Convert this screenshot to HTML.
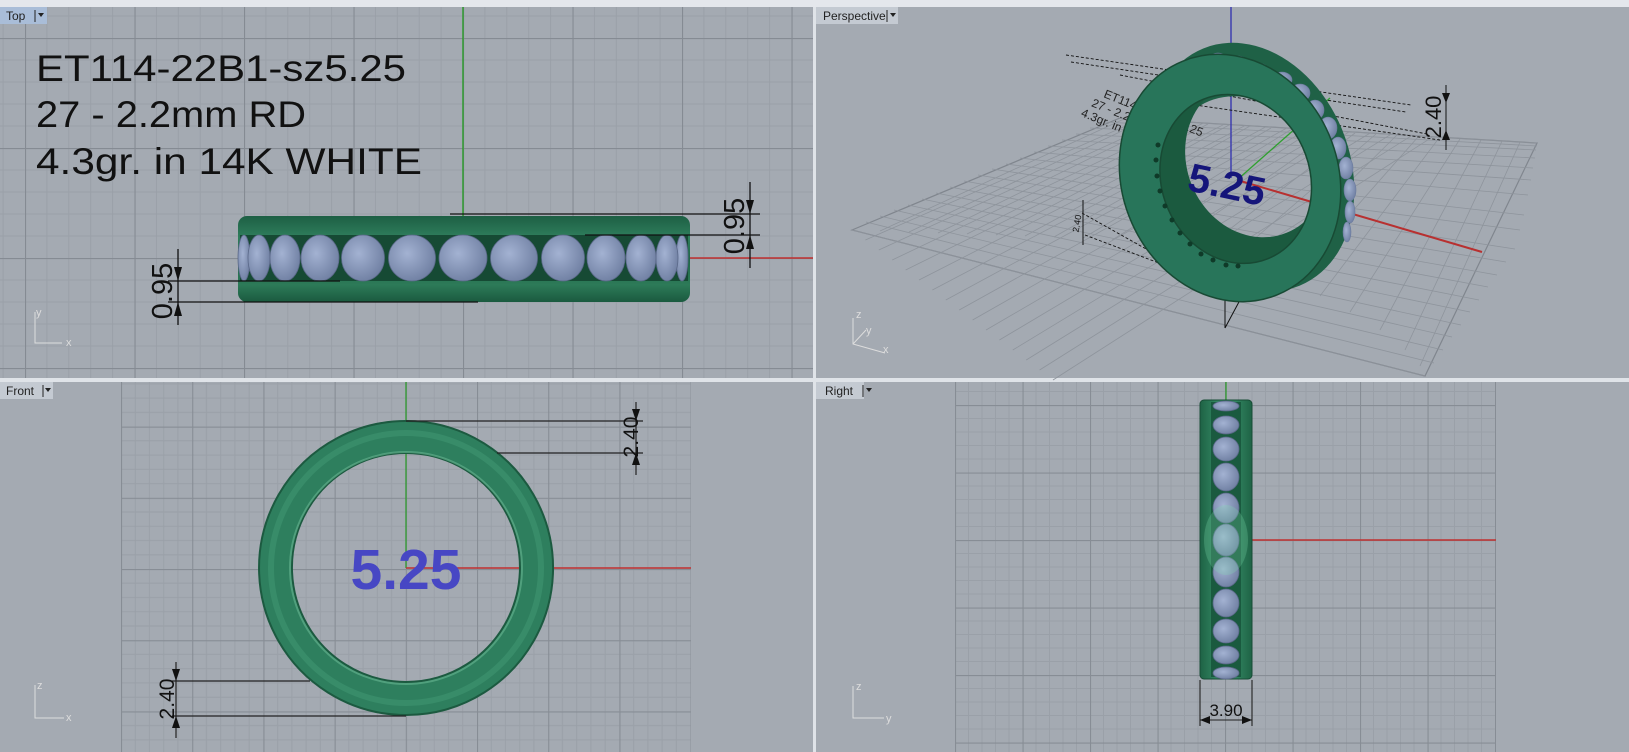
<!DOCTYPE html>
<html><head><meta charset="utf-8"><style>
html,body{margin:0;padding:0;width:1629px;height:752px;overflow:hidden;background:#a4aab2}
svg{display:block}
text{font-family:"Liberation Sans",Arial,sans-serif}
</style></head><body>
<svg width="1629" height="752" viewBox="0 0 1629 752" xmlns="http://www.w3.org/2000/svg">
<defs>
<pattern id="gTop" x="25" y="38" width="109.5" height="110" patternUnits="userSpaceOnUse">
 <path d="M21.9 0V110M43.8 0V110M65.7 0V110M87.6 0V110M0 22H109.5M0 44H109.5M0 66H109.5M0 88H109.5" stroke="#9aa0a8" stroke-width="1" fill="none"/>
 <path d="M0.5 0V110M0 0.5H109.5" stroke="#858b93" stroke-width="1.2" fill="none"/>
</pattern>
<pattern id="gFront" x="121" y="355.4" width="71.2" height="71.2" patternUnits="userSpaceOnUse">
 <path d="M14.24 0V71.2M28.48 0V71.2M42.72 0V71.2M56.96 0V71.2M0 14.24H71.2M0 28.48H71.2M0 42.72H71.2M0 56.96H71.2" stroke="#9aa0a8" stroke-width="1" fill="none"/>
 <path d="M0.5 0V71.2M0 0.5H71.2" stroke="#878d95" stroke-width="1.2" fill="none"/>
</pattern>
<pattern id="gRight" x="955" y="337.5" width="67.5" height="67.5" patternUnits="userSpaceOnUse">
 <path d="M13.5 0V67.5M27 0V67.5M40.5 0V67.5M54 0V67.5M0 13.5H67.5M0 27H67.5M0 40.5H67.5M0 54H67.5" stroke="#9aa0a8" stroke-width="1" fill="none"/>
 <path d="M0.5 0V67.5M0 0.5H67.5" stroke="#878d95" stroke-width="1.2" fill="none"/>
</pattern>
<linearGradient id="grTop" x1="0" y1="0" x2="0" y2="1">
 <stop offset="0" stop-color="#1d5f44"/><stop offset="0.25" stop-color="#2f7e5c"/><stop offset="0.5" stop-color="#1f6647"/><stop offset="0.8" stop-color="#2d7a58"/><stop offset="1" stop-color="#1a5a3f"/>
</linearGradient>
<linearGradient id="grRight" x1="0" y1="0" x2="1" y2="0">
 <stop offset="0" stop-color="#1e6245"/><stop offset="0.5" stop-color="#3d9a70"/><stop offset="1" stop-color="#1e6245"/>
</linearGradient>
<radialGradient id="stone" cx="0.4" cy="0.4" r="0.7">
 <stop offset="0" stop-color="#a3b2d2"/><stop offset="1" stop-color="#6b7b9e"/>
</radialGradient>
<clipPath id="hole">
 <ellipse cx="1235" cy="181" rx="74" ry="86" transform="rotate(-22 1230 178)"/>
</clipPath>
</defs>

<rect x="0" y="0" width="1629" height="7" fill="#e4e7ec"/>

<!-- TOP VIEW -->
<rect x="0" y="7" width="813" height="371" fill="url(#gTop)"/>
<line x1="463" y1="7" x2="463" y2="216" stroke="#2f9a2f" stroke-width="1.5"/>
<line x1="690" y1="258" x2="813" y2="258" stroke="#c03030" stroke-width="1.5"/>
<rect x="0" y="7" width="47" height="17" fill="#a9bdd8"/>
<text x="6" y="20" font-size="12" fill="#222">Top</text>
<line x1="35" y1="10" x2="35" y2="22" stroke="#222"/>
<path d="M38 13h6l-3 4z" fill="#222"/>
<text x="36" y="81" font-size="37" fill="#111" textLength="370" lengthAdjust="spacingAndGlyphs">ET114-22B1-sz5.25</text>
<text x="36" y="127" font-size="37" fill="#111" textLength="270" lengthAdjust="spacingAndGlyphs">27 - 2.2mm RD</text>
<text x="36" y="174" font-size="37" fill="#111" textLength="386" lengthAdjust="spacingAndGlyphs">4.3gr.  in 14K WHITE</text>
<rect x="238" y="216" width="452" height="86" rx="9" fill="url(#grTop)"/>
<rect x="240" y="235" width="448" height="46" fill="#164a34"/>
<g stroke="#5a6888" stroke-width="0.8" fill="url(#stone)">
 <ellipse cx="244" cy="258" rx="6" ry="23"/><ellipse cx="682" cy="258" rx="6" ry="23"/>
 <ellipse cx="259" cy="258" rx="11" ry="23"/><ellipse cx="667" cy="258" rx="11" ry="23"/>
 <ellipse cx="285" cy="258" rx="15" ry="23"/><ellipse cx="641" cy="258" rx="15" ry="23"/>
 <ellipse cx="320" cy="258" rx="19" ry="23"/><ellipse cx="606" cy="258" rx="19" ry="23"/>
 <ellipse cx="363" cy="258" rx="21.5" ry="23"/><ellipse cx="563" cy="258" rx="21.5" ry="23"/>
 <ellipse cx="412" cy="258" rx="23.5" ry="23"/><ellipse cx="514" cy="258" rx="23.5" ry="23"/>
 <ellipse cx="463" cy="258" rx="24" ry="23"/>
</g>
<g stroke="#111" stroke-width="1.3">
 <line x1="450" y1="214" x2="760" y2="214"/><line x1="585" y1="235" x2="760" y2="235"/>
 <line x1="750" y1="182" x2="750" y2="268"/>
 <line x1="168" y1="281" x2="340" y2="281"/><line x1="168" y1="302" x2="478" y2="302"/>
 <line x1="178" y1="249" x2="178" y2="325"/>
</g>
<g fill="#111">
 <path d="M750 214l-4 -14h8z"/><path d="M750 235l-4 14h8z"/>
 <path d="M178 281l-4 -14h8z"/><path d="M178 302l-4 14h8z"/>
</g>
<text transform="translate(744,226) rotate(-90)" font-size="29" fill="#111" text-anchor="middle">0.95</text>
<text transform="translate(172,291) rotate(-90)" font-size="29" fill="#111" text-anchor="middle">0.95</text>
<g stroke="#ddd" stroke-width="1" fill="none"><path d="M35 312V343H62"/></g>
<text x="36" y="316" font-size="11" fill="#ddd">y</text>
<text x="66" y="346" font-size="11" fill="#ddd">x</text>

<rect x="813" y="7" width="3" height="745" fill="#dfe3e8"/>
<rect x="0" y="378" width="1629" height="4" fill="#dfe3e8"/>

<!-- PERSPECTIVE -->
<rect x="816" y="7" width="813" height="371" fill="#a4aab2"/>
<g stroke="#8e949c" stroke-width="0.8" fill="none">
<path d="M852 230L1120 118L1537 143L1425 376Z" stroke="#80868e" stroke-width="1.2"/>
<path d="M865.4 240.0L1140.9 119.3M878.8 250.0L1161.7 120.5M892.2 260.0L1182.6 121.8M905.6 270.0L1203.4 123.0M919.0 280.0L1224.2 124.3M932.4 290.0L1245.1 125.5M945.8 300.0L1265.9 126.8M959.2 310.0L1286.8 128.0M972.6 320.0L1307.7 129.3M986.0 330.0L1328.5 130.5M999.4 340.0L1349.3 131.8M1012.8 350.0L1370.2 133.0M1026.2 360.0L1391.0 134.3M1039.6 370.0L1411.8 135.5M1053.0 380.0L1432.7 136.8"/>
<path d="M866 222L1434 363M880 216L1443 350M894 210L1452 337M908 205L1461 325M922 199L1470 312M936 193L1479 300M950 187L1488 287M964 181L1497 275M978 175L1506 262M992 169L1515 249M1006 164L1520 230M1020 158L1524 215M1034 152L1528 195M1048 146L1531 180M1062 140L1533 168M1076 134L1535 158M1090 128L1536 150M1105 122L1537 146"/>
<path d="M880 231L1124 119M909 232L1145 120M938 233L1166 121M967 234L1187 123M996 235L1208 124M1025 236L1229 125M1054 237L1250 126M1083 238L1271 128M1112 240L1292 129M1141 242L1313 130M1170 246L1334 131M1200 252L1355 133M1230 260L1376 134M1260 270L1397 135M1290 282L1418 137M1320 296L1439 138M1350 312L1460 139M1380 330L1481 140M1405 350L1502 141M1420 366L1520 142"/>
<path d="M852 230L1425 376M1120 118L1537 143"/>
</g>
<line x1="1231" y1="7" x2="1231" y2="178" stroke="#3030b0" stroke-width="1.3"/>
<line x1="1237" y1="180" x2="1482" y2="252" stroke="#b83030" stroke-width="2"/>
<line x1="1237" y1="180" x2="1330" y2="98" stroke="#30a030" stroke-width="1.3"/>
<g transform="translate(1103,97) rotate(22)" font-size="12" fill="#222">
 <text x="0" y="0">ET114-22B1-sz5.25</text><text x="-8" y="13">27 - 2.2mm RD</text><text x="-14" y="26">4.3gr.  in 14K WHITE</text>
</g>
<g stroke="#111" stroke-width="0.9" stroke-dasharray="3,2" fill="none">
 <path d="M1066 55L1411 105M1071 62L1406 112M1120 75L1427 134M1160 100L1440 140M1082 213L1171 263M1085 235L1172 268"/>
</g>
<g stroke="#111" stroke-width="1"><path d="M1446 85V150M1083 200V245M1225 290V328M1225 328L1240 300"/></g>
<path d="M1446 103l-4-10h8zM1446 130l-4 10h8z" fill="#111"/>
<text transform="translate(1441,117) rotate(-90)" font-size="22" fill="#111" text-anchor="middle">2.40</text>
<text transform="translate(1080,224) rotate(-80)" font-size="9" fill="#111" text-anchor="middle">2.40</text>
<!-- ring back band -->
<path fill-rule="evenodd" fill="#1f6146" transform="rotate(-22 1240 176)"
 d="M1254 44A98 128 0 1 0 1254.1 44ZM1240 95A74 86 0 1 1 1239.9 95Z"/>
<g fill="url(#stone)" stroke="#6b7b9e" stroke-width="0.6">
 <ellipse cx="1218" cy="58" rx="8" ry="5"/><ellipse cx="1238" cy="62" rx="9" ry="6"/><ellipse cx="1258" cy="70" rx="10" ry="7"/>
 <ellipse cx="1282" cy="80" rx="10" ry="8"/><ellipse cx="1300" cy="93" rx="10" ry="9"/><ellipse cx="1315" cy="110" rx="9" ry="10"/>
 <ellipse cx="1328" cy="128" rx="9" ry="11"/><ellipse cx="1338" cy="148" rx="8" ry="11"/><ellipse cx="1346" cy="168" rx="7" ry="11"/>
 <ellipse cx="1350" cy="190" rx="6" ry="11"/><ellipse cx="1350" cy="212" rx="5" ry="11"/><ellipse cx="1347" cy="232" rx="4" ry="10"/>
</g>
<!-- inner band visible through hole -->
<g clip-path="url(#hole)">
 <path fill-rule="evenodd" fill="#1b5a3f" d="M1100 60H1360V300H1100Z M1262 90A70 80 0 1 1 1261.9 90Z" transform="rotate(-22 1230 178)"/>
</g>
<path fill-rule="evenodd" fill="#28755a" stroke="#184a34" stroke-width="1.5" transform="rotate(-22 1230 178)"
 d="M1230 52A108 126 0 1 0 1230.1 52ZM1235 95A74 86 0 1 1 1234.9 95Z"/>
<g fill="#0f3a28">
 <circle cx="1158" cy="145" r="2.5"/><circle cx="1156" cy="160" r="2.5"/><circle cx="1157" cy="176" r="2.5"/><circle cx="1160" cy="191" r="2.5"/>
 <circle cx="1165" cy="206" r="2.5"/><circle cx="1172" cy="220" r="2.5"/><circle cx="1180" cy="233" r="2.5"/><circle cx="1190" cy="244" r="2.5"/>
 <circle cx="1201" cy="254" r="2.5"/><circle cx="1213" cy="260" r="2.5"/><circle cx="1226" cy="265" r="2.5"/><circle cx="1238" cy="266" r="2.5"/>
</g>
<text transform="translate(1186,190) rotate(12)" font-size="40" font-weight="bold" fill="#15157a">5.25</text>
<rect x="816" y="7" width="82" height="17" fill="#c4cad2"/>
<text x="823" y="20" font-size="12" fill="#222">Perspective</text>
<line x1="887" y1="10" x2="887" y2="22" stroke="#222"/>
<path d="M890 13h6l-3 4z" fill="#222"/>
<g stroke="#ddd" stroke-width="1" fill="none"><path d="M853 318V344L885 353M853 344L866 330"/></g>
<text x="856" y="318" font-size="11" fill="#ddd">z</text>
<text x="866" y="334" font-size="11" fill="#ddd">y</text>
<text x="883" y="353" font-size="11" fill="#ddd">x</text>

<!-- FRONT VIEW -->
<rect x="121" y="382" width="570" height="370" fill="url(#gFront)"/>
<line x1="406" y1="382" x2="406" y2="568" stroke="#2f9a2f" stroke-width="1.3"/>
<line x1="406" y1="568" x2="691" y2="568" stroke="#c03030" stroke-width="1.5"/>
<path fill-rule="evenodd" fill="#2e7f5e" stroke="#1c5a40" stroke-width="2"
 d="M406 421A147 147 0 1 0 406.1 421ZM406 453A114 114.5 0 1 1 405.9 453Z"/>
<circle cx="406" cy="568" r="135" fill="none" stroke="#3f9472" stroke-width="6" opacity="0.6"/>
<circle cx="406" cy="568" r="116" fill="none" stroke="#5fae8a" stroke-width="2" opacity="0.7"/>
<text x="406" y="589" font-size="57" font-weight="bold" fill="#4747c4" text-anchor="middle">5.25</text>
<g stroke="#222" stroke-width="1.2">
 <line x1="406" y1="421" x2="643" y2="421"/><line x1="497" y1="453" x2="643" y2="453"/><line x1="636" y1="402" x2="636" y2="475"/>
 <line x1="172" y1="681" x2="310" y2="681"/><line x1="172" y1="716" x2="406" y2="716"/><line x1="176" y1="662" x2="176" y2="738"/>
</g>
<g fill="#111">
 <path d="M636 421l-4-12h8zM636 453l-4 12h8zM176 681l-4-12h8zM176 716l-4 12h8z"/>
</g>
<text transform="translate(638,437) rotate(-90)" font-size="21" fill="#111" text-anchor="middle">2.40</text>
<text transform="translate(174,699) rotate(-90)" font-size="21" fill="#111" text-anchor="middle">2.40</text>
<rect x="0" y="382" width="53" height="17" fill="#c4cad2"/>
<text x="6" y="395" font-size="12" fill="#222">Front</text>
<line x1="43" y1="385" x2="43" y2="397" stroke="#222"/>
<path d="M45 388h6l-3 4z" fill="#222"/>
<g stroke="#ddd" stroke-width="1" fill="none"><path d="M35 685V718H64"/></g>
<text x="37" y="689" font-size="11" fill="#ddd">z</text>
<text x="66" y="721" font-size="11" fill="#ddd">x</text>

<!-- RIGHT VIEW -->
<rect x="955" y="382" width="541" height="370" fill="url(#gRight)"/>
<line x1="1226" y1="382" x2="1226" y2="400" stroke="#2f9a2f" stroke-width="1.3"/>
<line x1="1252" y1="540" x2="1496" y2="540" stroke="#c03030" stroke-width="1.5"/>
<rect x="1200" y="400" width="52" height="279" rx="4" fill="url(#grRight)" stroke="#174c35"/>
<rect x="1211" y="402" width="30" height="275" fill="#1a5a3f"/>
<g fill="url(#stone)" stroke="#5a6888" stroke-width="0.8">
 <ellipse cx="1226" cy="406" rx="13" ry="5"/><ellipse cx="1226" cy="425" rx="13" ry="9"/><ellipse cx="1226" cy="449" rx="13" ry="12"/>
 <ellipse cx="1226" cy="477" rx="13" ry="14"/><ellipse cx="1226" cy="508" rx="13" ry="15"/><ellipse cx="1226" cy="540" rx="13" ry="16"/>
 <ellipse cx="1226" cy="572" rx="13" ry="15"/><ellipse cx="1226" cy="603" rx="13" ry="14"/><ellipse cx="1226" cy="631" rx="13" ry="12"/>
 <ellipse cx="1226" cy="655" rx="13" ry="9"/><ellipse cx="1226" cy="673" rx="13" ry="6"/>
</g>
<ellipse cx="1226" cy="540" rx="22" ry="35" fill="#7fe0b0" opacity="0.25"/>
<g stroke="#222" stroke-width="1.1"><line x1="1200" y1="680" x2="1200" y2="726"/><line x1="1252" y1="680" x2="1252" y2="726"/><line x1="1200" y1="720" x2="1252" y2="720"/></g>
<path d="M1200 720l10-4v8zM1252 720l-10-4v8z" fill="#111"/>
<text x="1226" y="716" font-size="17" fill="#111" text-anchor="middle">3.90</text>
<rect x="816" y="382" width="48" height="17" fill="#c4cad2"/>
<text x="825" y="395" font-size="12" fill="#222">Right</text>
<line x1="863" y1="385" x2="863" y2="397" stroke="#222"/>
<path d="M866 388h6l-3 4z" fill="#222"/>
<g stroke="#ddd" stroke-width="1" fill="none"><path d="M853 686V718H884"/></g>
<text x="856" y="690" font-size="11" fill="#ddd">z</text>
<text x="886" y="722" font-size="11" fill="#ddd">y</text>
</svg>
</body></html>
